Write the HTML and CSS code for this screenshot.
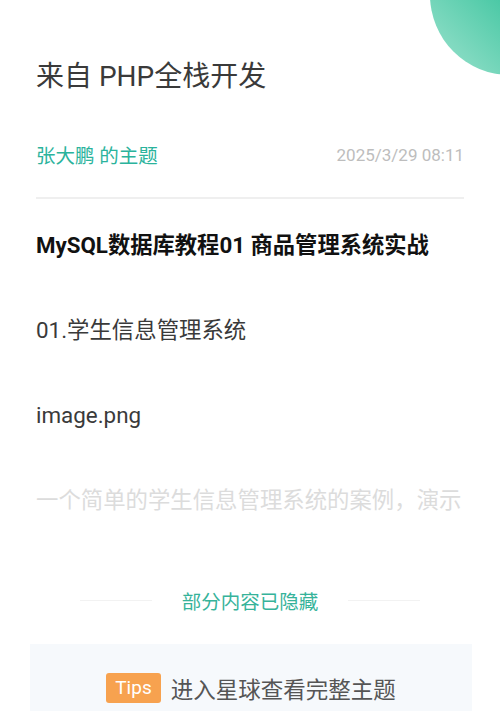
FILE: index.html
```html
<!DOCTYPE html>
<html lang="zh-CN">
<head>
    <meta charset="UTF-8">
    <meta name="viewport" content="width=device-width, initial-scale=1.0">
    <title>来自 PHP全栈开发</title>
    <link rel="stylesheet" href="styles.css">
</head>
<body>
    <div class="page">
        <!-- corner decoration -->
        <div class="corner"></div>

        <header class="group">
            <h1>来自 PHP全栈开发</h1>
        </header>

        <div class="meta">
            <span class="author">张大鹏 的主题</span>
            <span class="date">2025/3/29 08:11</span>
        </div>

        <article class="topic">
            <h2>MySQL数据库教程01 商品管理系统实战</h2>
            <p>01.学生信息管理系统</p>
            <p>image.png</p>
            <p class="fade">一个简单的学生信息管理系统的案例，演示</p>
        </article>

        <div class="hidden-note">
            <span class="line"></span>
            <span class="label">部分内容已隐藏</span>
            <span class="line"></span>
        </div>

        <div class="tips">
            <span class="badge">Tips</span>
            <span class="tips-text">进入星球查看完整主题</span>
        </div>
    </div>
</body>
</html>
```

FILE: styles.css
```css
* {
    margin: 0;
    padding: 0;
    box-sizing: border-box;
}

body {
    font-family: Roboto, "Noto Sans CJK SC", sans-serif;
    background: #fff;
    color: #333;
    overflow: hidden;
}

.page {
    position: relative;
    width: 500px;
    height: 711px;
    overflow: hidden;
}

.corner {
    position: absolute;
    top: -85px;
    right: -90px;
    width: 160px;
    height: 160px;
    border-radius: 50%;
    background: linear-gradient(225deg, #14b38c 0%, #4cc9a6 55%, #9fe3cf 100%);
}

.group {
    padding: 57px 36px 0;
}

h1 {
    font-size: 28px;
    font-weight: 400;
    color: #3a3a3a;
    line-height: 40px;
}

.meta {
    display: flex;
    justify-content: space-between;
    align-items: center;
    margin: 43px 36px 0;
    padding-bottom: 28px;
    border-bottom: 2px solid #efefef;
}

.author {
    font-size: 19.5px;
    color: #2bb39c;
}

.date {
    font-size: 17px;
    color: #bdbdbd;
}

.topic {
    padding: 0 36px;
}

.topic h2 {
    font-size: 22.3px;
    font-weight: 700;
    color: #111;
    line-height: 32px;
    margin-top: 30px;
}

.topic p {
    font-size: 22.4px;
    color: #3a3a3a;
    line-height: 32px;
    margin-top: 53px;
}

.topic p.fade {
    color: #dcdcdc;
}

.hidden-note {
    display: flex;
    justify-content: center;
    align-items: center;
    gap: 30px;
    margin-top: 70px;
}

.hidden-note .line {
    width: 72px;
    height: 1px;
    background: #f2f2f2;
}

.hidden-note .label {
    font-size: 19.5px;
    color: #36b39a;
}

.tips {
    display: flex;
    justify-content: center;
    align-items: center;
    gap: 10px;
    margin: 29px 28px 0 30px;
    padding: 28px 0 40px;
    background: #f6f9fc;
}

.badge {
    background: #f7a24f;
    color: #fff;
    font-size: 19px;
    line-height: 30px;
    padding: 0 9px;
    border-radius: 3px;
}

.tips-text {
    font-size: 22.5px;
    color: #555;
}
```
